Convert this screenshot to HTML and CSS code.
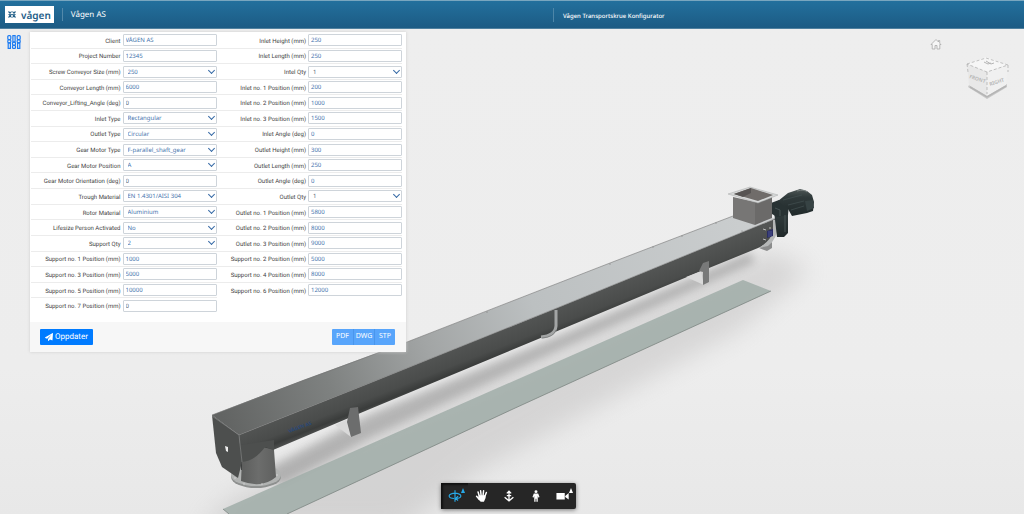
FILE: index.html
```html
<!DOCTYPE html>
<html lang="no">
<head>
<meta charset="utf-8">
<title>Vågen Transportskrue Konfigurator</title>
<link rel="stylesheet" href="styles.css">
</head>
<body>
<header class="topbar">
  <div class="brand">
    <a class="logo" href="#">
      <svg class="logo-mark" viewBox="0 0 8 7" aria-hidden="true"><path d="M.5.5L3.300 3.500.5 6.500M3.500.5L1 3.500 3.500 6.500M4.500.5L7 3.500 4.500 6.500M7.500.5L4.700 3.500 7.500 6.500" fill="none" stroke="#1d5c86" stroke-width="1.100"/></svg>
      <span>vågen</span>
    </a>
    <span class="company">Vågen AS</span>
  </div>
  <h1 class="title">Vågen Transportskrue Konfigurator</h1>
</header>
<main class="viewer">
  <svg class="scene" viewBox="0 29 1024 485" preserveAspectRatio="xMidYMid slice" aria-label="Screw conveyor model">
    <defs>
      <linearGradient id="bg" x1="0" y1="0" x2="0" y2="1"><stop offset="0" stop-color="#eee"/><stop offset=".7" stop-color="#ededed"/><stop offset="1" stop-color="#e8e8e8"/></linearGradient>
      <linearGradient id="lid" gradientUnits="userSpaceOnUse" x1="225" y1="425" x2="755" y2="215"><stop offset="0" stop-color="#626463"/><stop offset=".2" stop-color="#7f8281"/><stop offset=".38" stop-color="#a2a5a5"/><stop offset=".58" stop-color="#bcc0c1"/><stop offset="1" stop-color="#cbcecf"/></linearGradient>
      <linearGradient id="side" gradientUnits="userSpaceOnUse" x1="370" y1="382" x2="381" y2="410"><stop offset="0" stop-color="#525453"/><stop offset=".5" stop-color="#4a4c4b"/><stop offset=".75" stop-color="#3a3c3b"/><stop offset=".9" stop-color="#4c4e4d"/><stop offset="1" stop-color="#2f3030"/></linearGradient>
      <linearGradient id="tube" x1="0" y1="0" x2="1" y2="0"><stop offset="0" stop-color="#5c5d5c"/><stop offset=".5" stop-color="#6c6d6c"/><stop offset="1" stop-color="#5f605f"/></linearGradient>
      <linearGradient id="motor" x1="0" y1="0" x2="0" y2="1"><stop offset="0" stop-color="#4e5756"/><stop offset=".3" stop-color="#303a3b"/><stop offset="1" stop-color="#20292a"/></linearGradient>
      <filter id="soft" x="-20%" y="-40%" width="140%" height="180%"><feGaussianBlur stdDeviation="12"/></filter>
      <filter id="near" x="-20%" y="-40%" width="140%" height="180%"><feGaussianBlur stdDeviation="5"/></filter>
    </defs>
    <rect y="29" width="1024" height="485" fill="url(#bg)"/>
    <path d="M230 500L560 350L770 250L810 270L740 330L480 470L400 530H200Z" fill="#a8a6a6" opacity=".32" filter="url(#soft)"/>
    <path d="M265 470L370 414L560 335L750 252L755 262L560 350L370 438L280 486Z" fill="#777" opacity=".45" filter="url(#near)"/>
    <path d="M223 509L743 280L771 291L513 409L287 514H229Z" fill="#a2aeaa" opacity=".88"/>
    <path d="M771 291L513 409L287 514M223 509L229 514" fill="none" stroke="#7c8582" stroke-width=".8"/>
    <path d="M759 248L772 242V248L767 251Z" fill="#8b8c8c"/>

    <ellipse cx="256" cy="477" rx="25" ry="11" fill="#8e908f"/><ellipse cx="256" cy="475" rx="25" ry="11" fill="#b1b3b2"/>
    <path d="M239 435L370 383L557 308L777 218C778 230 774 241 758 248L687 277L543 337L370 409L273 450L250 470H241Z" fill="url(#side)"/>
    <path d="M686 277L701 271L704 285Z" fill="#dadada"/><path d="M703 263L709 261V282L703 285V272L699 271Z" fill="#787979"/>
    <path d="M335 425L348 419L351 437Z" fill="#d9d9d9"/><path d="M350 408L358 407L361 433L351 437L347 422Z" fill="#6c6d6d"/>
    <path d="M242 460Q255 460 263 447L274 450L276 477Q262 489 241 481Z" fill="url(#tube)"/>
    <path d="M241 462Q255 461 265 447L274 450V440L241 445Z" fill="#4d4f4e"/>
    <path d="M212 415L303 380L407 342L487 311L610 263L733 216L777 218L557 308L370 383L239 435Z" fill="url(#lid)"/>
    <path d="M212 415L407 342L610 263L733 216M239 435L370 383L557 308L777 218" fill="none" stroke="#777" stroke-width=".6"/>
    <path d="M212 415L239 435L242 462L238 478L222 467L216 453Z" fill="#4d4f4e"/><path d="M212 416L239 435L242 462" fill="none" stroke="#818383" stroke-width=".7"/>
    <path d="M225 446l3 1v5l-2-1z" fill="#eee"/>
    <g fill="#ddd"><circle cx="235" cy="478" r=".7"/><circle cx="244" cy="484" r=".7"/><circle cx="262" cy="484" r=".7"/><circle cx="277" cy="475" r=".7"/></g>
    <text class="tube-name" transform="translate(289 433) rotate(-20)">VÅGEN AS</text>
    <path d="M556 310V326Q555 336 541 337" fill="none" stroke="#a3a5a5" stroke-width="3"/>
    <path d="M542 338Q554 337 556 330" fill="none" stroke="#707272" stroke-width=".7"/>

    <g fill="#777"><circle cx="610" cy="264" r=".6"/><circle cx="653" cy="247" r=".6"/><circle cx="682" cy="236" r=".6"/><circle cx="716" cy="223" r=".6"/><circle cx="742" cy="231" r=".6"/><circle cx="487" cy="312" r=".6"/></g>
    <path d="M773 220H777Q780 236 768 246L759 248Q771 240 773 232Z" fill="#b5b7b7"/>
    <path d="M774 211L779 205L788 208V233L784 237L777 237Z" fill="url(#motor)"/>
    <path d="M771 203L779 200L789 204L788 215L777 217L772 214Z" fill="#283233"/><path d="M775 208l5 2v6M785 215v17" fill="none" stroke="#465253" stroke-width="1"/>
    <path d="M778 201L788 193L800 189L807 191L812 195L814 202L813 211L807 213L792 216L788 209Z" fill="url(#motor)"/>
    <path d="M783 200L802 195M788 205L804 201M791 210L804 206" stroke="#435051" stroke-width=".7"/>
    <path d="M805 201L813 200L814 208L807 211Z" fill="#374344"/><path d="M797 191Q804 189 807 192" stroke="#78807f" stroke-width="1" fill="none"/>
    <path d="M763 229l3 1M763 239l3 1M770 227v2" stroke="#bbb" stroke-width="1"/><path d="M767 231l6-2v7l-6 2z" fill="#2a2d64"/><path d="M769 231v6M771 231v5" stroke="#6570b4" stroke-width=".6"/>
    <path d="M733 197L755 202V225L733 218Z" fill="#777675"/><path d="M755 202L772 197V218L755 225Z" fill="#6b6a69"/>
    <path d="M728 194L750 187L778 195L758 203Z" fill="#d6d8d8" stroke="#a6a8a8" stroke-width=".5"/>
    <path d="M734 194L751 188L773 195L758 201Z" fill="#706c6a"/><path d="M734 194L751 188V193L743 197Z" fill="#575453"/>
  </svg>

  <button class="panel-toggle" type="button" aria-label="Parameters">
    <svg viewBox="0 0 14 14"><g fill="none" stroke="#1d7cf2" stroke-width="1.200"><rect x=".8" y=".6" width="3" height="4" rx="1"/><circle cx="2.300" cy="6.300" r="1.600"/><rect x="1.200" y="8" width="2.200" height="5.400"/><rect x="5.900" y=".6" width="2.200" height="6.400"/><circle cx="7" cy="8.800" r="1.600"/><rect x="5.500" y="10.400" width="3" height="3" rx="1"/><rect x="10.200" y=".6" width="3" height="4" rx="1"/><circle cx="11.700" cy="6.300" r="1.600"/><rect x="10.600" y="8" width="2.200" height="5.400"/></g></svg>
  </button>

  <form class="panel">
    <div class="fields">
      <div class="column">
        <div class="row"><label for="a1">Client</label><input id="a1" value="VÅGEN AS"></div>
        <div class="row"><label for="a2">Project Number</label><input id="a2" value="12345"></div>
        <div class="row"><label for="a3">Screw Conveyor Size (mm)</label><span class="pick"><select id="a3"><option>250</option></select></span></div>
        <div class="row"><label for="a4">Conveyor Length (mm)</label><input id="a4" value="6000"></div>
        <div class="row"><label for="a5">Conveyor_Lifting_Angle (deg)</label><input id="a5" class="plain" value="0"></div>
        <div class="row"><label for="a6">Inlet Type</label><span class="pick"><select id="a6"><option>Rectangular</option></select></span></div>
        <div class="row"><label for="a7">Outlet Type</label><span class="pick"><select id="a7"><option>Circular</option></select></span></div>
        <div class="row"><label for="a8">Gear Motor Type</label><span class="pick"><select id="a8"><option>F-parallel_shaft_gear</option></select></span></div>
        <div class="row"><label for="a9">Gear Motor Position</label><span class="pick"><select id="a9"><option>A</option></select></span></div>
        <div class="row"><label for="a10">Gear Motor Orientation (deg)</label><input id="a10" class="plain" value="0"></div>
        <div class="row"><label for="a11">Trough Material</label><span class="pick"><select id="a11"><option>EN 1.4301/AISI 304</option></select></span></div>
        <div class="row"><label for="a12">Rotor Material</label><span class="pick"><select id="a12"><option>Aluminium</option></select></span></div>
        <div class="row"><label for="a13">Lifesize Person Activated</label><span class="pick"><select id="a13"><option>No</option></select></span></div>
        <div class="row"><label for="a14">Support Qty</label><span class="pick"><select id="a14"><option>2</option></select></span></div>
        <div class="row"><label for="a15">Support no. 1 Position (mm)</label><input id="a15" value="1000"></div>
        <div class="row"><label for="a16">Support no. 3 Position (mm)</label><input id="a16" value="5000"></div>
        <div class="row"><label for="a17">Support no. 5 Position (mm)</label><input id="a17" value="10000"></div>
        <div class="row"><label for="a18">Support no. 7 Position (mm)</label><input id="a18" class="plain" value="0"></div>
      </div>
      <div class="column">
        <div class="row"><label for="b1">Inlet Height (mm)</label><input id="b1" value="250"></div>
        <div class="row"><label for="b2">Inlet Length (mm)</label><input id="b2" value="250"></div>
        <div class="row"><label for="b3">Intel Qty</label><span class="pick"><select id="b3" class="plain"><option>1</option></select></span></div>
        <div class="row"><label for="b4">Inlet no. 1 Position (mm)</label><input id="b4" value="200"></div>
        <div class="row"><label for="b5">Inlet no. 2 Position (mm)</label><input id="b5" value="1000"></div>
        <div class="row"><label for="b6">Inlet no. 3 Position (mm)</label><input id="b6" value="1500"></div>
        <div class="row"><label for="b7">Inlet Angle (deg)</label><input id="b7" value="0"></div>
        <div class="row"><label for="b8">Outlet Height (mm)</label><input id="b8" value="300"></div>
        <div class="row"><label for="b9">Outlet Length (mm)</label><input id="b9" value="250"></div>
        <div class="row"><label for="b10">Outlet Angle (deg)</label><input id="b10" value="0"></div>
        <div class="row"><label for="b11">Outlet Qty</label><span class="pick"><select id="b11" class="plain"><option>1</option></select></span></div>
        <div class="row"><label for="b12">Outlet no. 1 Position (mm)</label><input id="b12" value="5800"></div>
        <div class="row"><label for="b13">Outlet no. 2 Position (mm)</label><input id="b13" value="8000"></div>
        <div class="row"><label for="b14">Outlet no. 3 Position (mm)</label><input id="b14" value="9000"></div>
        <div class="row"><label for="b15">Support no. 2 Position (mm)</label><input id="b15" value="5000"></div>
        <div class="row"><label for="b16">Support no. 4 Position (mm)</label><input id="b16" value="8000"></div>
        <div class="row"><label for="b17">Support no. 6 Position (mm)</label><input id="b17" value="12000"></div>
      </div>
    </div>
    <div class="actions">
      <button class="update" type="button"><svg viewBox="0 0 16 16" aria-hidden="true"><path d="M15.500.2L.5 8.500c-.7.400-.5 1.200 0 1.400l3.600 1.500L13 3.500 6 12v3c0 .9 1 1.300 1.600.600l2.200-2.600 4 1.700c.5.200 1.100-.1 1.200-.7L16 .8c.1-.5-.2-.8-.5-.6z" fill="#fff"/></svg>Oppdater</button>
      <div class="exports"><button type="button">PDF</button><button type="button">DWG</button><button type="button">STP</button></div>
    </div>
  </form>

  <div class="compass">
    <button class="home" type="button" aria-label="Home"><svg viewBox="0 0 12 12"><path d="M1 6.500L6 1.500 8.500 4V2.500h1.200v2.700L11 6.500H9.800V11H7V7.500H5V11H2.200V6.500Z" fill="#f6f6f6" stroke="#aaa" stroke-width=".8"/></svg></button>
    <svg class="cube" viewBox="0 0 46 46" aria-label="View cube"><path d="M4 32L23 44 43 32V29L23 40 5 30Z" fill="#c8c8c8"/><path d="M3 9L22 2 44 10 23 17Z" fill="#f6f6f6"/><path d="M3 9L23 17V41L5 30Z" fill="#e8e8e8"/><path d="M23 17L44 10 42 30 23 41Z" fill="#f0f0f0"/><path d="M3 9L22 3 44 10 23 17ZM3 9L4 17M44 10V17M23 17V39" fill="none" stroke="#aaa" stroke-width=".7" stroke-dasharray="3 2"/><path d="M6 32L23 42 42 31" fill="none" stroke="#b5b5b5" stroke-width="1.500"/><text class="cube-text" transform="translate(5 23) rotate(18)">FRONT</text><text class="cube-text" transform="translate(26 31) rotate(-18)">RIGHT</text><path d="M20 7l4 2 3-1m-5-2 5 3 3-1" fill="none" stroke="#b5b5b5"/></svg>
  </div>

  <div class="dock">
    <div class="toolbar">
      <button class="active" type="button" aria-label="Orbit"><svg viewBox="0 0 16 16"><path d="M8 1.500v13M5.500 5C-.5 6.500 0 10.500 7 10.800M10.500 5c6 1.500 5.500 5.500-1.500 5.800M5.500 5h5M11.500 8.300L8.800 10.800l2.700 2.400" fill="none" stroke="#27a9e8" stroke-width="1.300"/></svg><i class="more"></i></button>
      <button type="button" aria-label="Pan"><svg viewBox="0 0 16 16"><path d="M5 8.500L3.500 3.400M7 7.500L6.400 2M9.200 7.500L9.800 2M11.200 8.500L13 4M5 12L1.800 8.300" stroke="#fff" stroke-width="1.700" stroke-linecap="round"/><path d="M4.200 7h7.600l.4 3-2 4.500H6.500L3.500 11z" fill="#fff"/></svg></button>
      <button type="button" aria-label="Zoom"><svg viewBox="0 0 16 16"><path d="M8 3v10M5.500 5L8 2.500 10.500 5M5.500 7.500h5M3 9.500L8 13.500 13 9.500" fill="none" stroke="#fff" stroke-width="1.500"/></svg></button>
      <button type="button" aria-label="Walk"><svg viewBox="0 0 16 16"><circle cx="8" cy="3" r="1.700" fill="#fff"/><path d="M5.500 5h5l1.500 4-1 1-1-2v6.500H8.500V11h-1v3.500H6V8L5 10 4 9z" fill="#fff"/></svg></button>
      <button type="button" aria-label="Camera"><svg viewBox="0 0 16 16"><path d="M.5 4.500h9.500v7.500H.5zM10.500 8l4-3.500v7.500l-4-3z" fill="#fff"/></svg><i class="more"></i></button>
    </div>
  </div>
</main>
</body>
</html>
```
FILE: styles.css
```css
* { box-sizing: border-box; }
html, body { height: 100%; }
body { margin: 0; display: flex; flex-direction: column; font-family: "Noto Sans", "Open Sans", sans-serif; color: #444; overflow: hidden; text-rendering: geometricPrecision; }
button, input, select { font: inherit; margin: 0; padding: 0; border: 0; text-rendering: inherit; }

.topbar { height: 29px; flex: none; display: grid; grid-template-columns: 54fr 46fr; align-items: center; background: linear-gradient(#23709d, #1c5b84); border-top: 1px solid #79a6bf; border-bottom: 1px solid #4f809f; color: #fff; }
.brand { display: flex; align-items: center; padding-left: 5px; gap: 8px; }
.logo { display: flex; align-items: center; gap: 5px; height: 17px; padding: 0 3px; background: #fff; color: #1d5c86; font: 600 10px/16px "Noto Sans", sans-serif; text-decoration: none; }
.logo-mark { width: 8px; height: 7px; }
.company { border-left: 1px solid #5289aa; padding-left: 8px; font-size: 8px; line-height: 13px; }
.title { margin: 0; border-left: 1px solid #4d86a8; padding: 2px 0 0 9px; font-size: 6px; line-height: 12px; font-weight: 500; }

.viewer { position: relative; flex: 1; min-height: 0; display: flex; align-items: flex-start; padding: 3px 8px 0 7px; }
.scene { position: absolute; inset: 0; width: 100%; height: 100%; }
.tube-name { font-size: 5px; font-weight: 700; fill: #294879; }

.panel-toggle { position: relative; width: 14px; height: 14px; margin: 3px 9px 0 0; background: none; }
.panel-toggle svg { display: block; width: 14px; height: 14px; }

.panel { position: relative; width: 376px; background: #fff; box-shadow: 0 0 3px #ccc; }
.fields { display: grid; grid-template-columns: 1fr 1fr; height: 290px; padding: 1px 4px 8px 1px; }
.column { display: grid; grid-template-rows: repeat(18, 1fr); }
.row { display: grid; grid-template-columns: 1fr 94px; gap: 2px; align-items: center; border-bottom: 1px solid #ececec; }
.row:last-child { border-color: transparent; }
.row label { text-align: right; font-family: Roboto, "Open Sans", sans-serif; font-size: 6px; line-height: 8px; padding-top: 3px; white-space: nowrap; }
.row input, .row select { width: 100%; height: 12px; display: block; border: 1px solid #ced4da; border-radius: 1px; background: #fff; color: #4574ad; font-size: 6px; line-height: 10px; padding: 0 2px; }
.row select { appearance: none; padding: 0 4px; }
.row .plain { color: #556270; }
.pick { position: relative; }
.pick::after { content: ""; position: absolute; right: 3px; top: 3px; width: 4px; height: 4px; border: solid #3569a6; border-width: 0 1px 1px 0; transform: rotate(45deg); pointer-events: none; }
.pick::after { top: 2px; }

.actions { display: flex; justify-content: space-between; padding: 7px 11px 7px 10px; background: #f7f7f7; }
.actions button { height: 16px; color: #fff; font-size: 7px; line-height: 16px; }
.update { display: flex; align-items: center; gap: 2px; border-radius: 1px; background: #007bff; }
.actions .update { font-family: Roboto, "Open Sans", sans-serif; font-size: 8px; padding: 0 5px; }
.update svg { width: 8px; height: 8px; }
.exports { display: flex; border-radius: 1px; overflow: hidden; }
.exports button { width: 21px; background: #58a5fb; }
.exports button + button { border-left: 1px solid #4a96ec; }

.compass { position: relative; margin-left: auto; display: flex; align-items: flex-start; gap: 22px; padding: 6px 6px 0 0; }
.home { width: 12px; height: 12px; background: none; }
.home svg { display: block; width: 12px; height: 12px; }
.cube { width: 46px; height: 46px; margin-top: 17px; }
.cube-text { font-size: 5px; font-weight: 600; fill: #b2b2b2; }

.dock { position: absolute; left: 0; right: 7px; bottom: 5px; display: flex; justify-content: center; }
.toolbar { display: flex; background: #262626; border-radius: 2px; box-shadow: 0 1px 4px #777; }
.toolbar button { position: relative; width: 27px; height: 26px; display: flex; align-items: center; justify-content: center; background: none; }
.toolbar svg { width: 14px; height: 14px; }
.toolbar .active { box-shadow: inset 2px 2px 2px #111; }
.more { position: absolute; right: 3px; top: 5px; border: 2px solid transparent; border-top: 0; border-bottom: 5px solid #fff; }
.active .more { border-bottom-color: #27a9e8; }
```
